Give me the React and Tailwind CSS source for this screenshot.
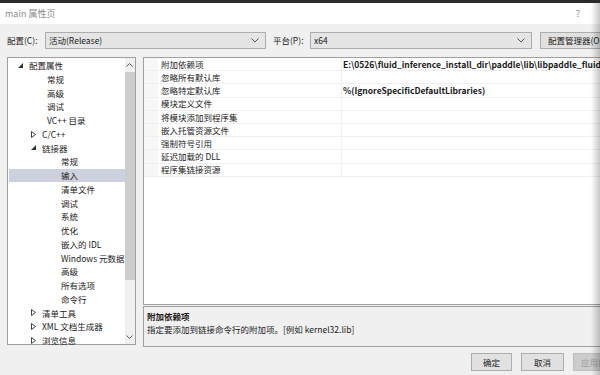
import React from "react";

const tree = [
  { t: "配置属性", lv: 0, exp: "open" },
  { t: "常规", lv: 1 },
  { t: "高级", lv: 1 },
  { t: "调试", lv: 1 },
  { t: "VC++ 目录", lv: 1 },
  { t: "C/C++", lv: 1, exp: "closed" },
  { t: "链接器", lv: 1, exp: "open" },
  { t: "常规", lv: 2 },
  { t: "输入", lv: 2, sel: true },
  { t: "清单文件", lv: 2 },
  { t: "调试", lv: 2 },
  { t: "系统", lv: 2 },
  { t: "优化", lv: 2 },
  { t: "嵌入的 IDL", lv: 2 },
  { t: "Windows 元数据", lv: 2 },
  { t: "高级", lv: 2 },
  { t: "所有选项", lv: 2 },
  { t: "命令行", lv: 2 },
  { t: "清单工具", lv: 1, exp: "closed" },
  { t: "XML 文档生成器", lv: 1, exp: "closed" },
  { t: "浏览信息", lv: 1, exp: "closed" },
];

const props = [
  ["附加依赖项", "E:\\0526\\fluid_inference_install_dir\\paddle\\lib\\libpaddle_fluid.lib"],
  ["忽略所有默认库", ""],
  ["忽略特定默认库", "%(IgnoreSpecificDefaultLibraries)"],
  ["模块定义文件", ""],
  ["将模块添加到程序集", ""],
  ["嵌入托管资源文件", ""],
  ["强制符号引用", ""],
  ["延迟加载的 DLL", ""],
  ["程序集链接资源", ""],
];

function Chevron() {
  return (
    <svg width="8" height="5" viewBox="0 0 8 5" className="shrink-0">
      <path d="M0.5 0.5 L4 4 L7.5 0.5" fill="none" stroke="#555" strokeWidth="1" />
    </svg>
  );
}

function Arrow({ exp }) {
  if (exp === "open")
    return (
      <svg width="5" height="5" viewBox="0 0 5 5">
        <polygon points="5,0 5,5 0,5" fill="#333" />
      </svg>
    );
  return (
    <svg width="5" height="7" viewBox="0 0 5 7">
      <polygon points="0.5,0.5 4.5,3.5 0.5,6.5" fill="none" stroke="#444" strokeWidth="1" />
    </svg>
  );
}

function Combo({ w, text }) {
  return (
    <div className={`${w} shrink-0 h-[17px] bg-[#e5e5e5] border border-[#acacac] flex items-center justify-between pl-[3px] pr-[6px]`}>
      <span>{text}</span>
      <Chevron />
    </div>
  );
}

export default function App() {
  const indent = ["pl-[25px]", "pl-[38px]", "pl-[52px]"];
  const arrowPos = ["w-[17px] pl-[9px]", "w-[30px] pl-[22px]", "w-[44px] pl-[36px]"];
  return (
    <div className="w-[600px] h-[375px] bg-[#f0f0f0] relative overflow-hidden font-['Noto_Sans_CJK_SC',sans-serif] text-[8.5px] leading-none text-[#1a1a1a]">
      <div className="h-[3px] bg-[#2b2b2b]" />
      <div className="h-[21px] bg-white flex items-center justify-between pl-[5px] pr-[20px] text-[#8c8c8c] text-[9px]">
        <span>main 属性页</span>
        <span>?</span>
      </div>

      <div className="flex items-center mt-[8px] pl-[7px] whitespace-nowrap">
        <span className="w-[38px] shrink-0">配置(C):</span>
        <Combo w="w-[221px]" text="活动(Release)" />
        <span className="w-[37px] ml-[7px] shrink-0">平台(P):</span>
        <Combo w="w-[222px]" text="x64" />
        <div className="ml-[8px] w-[76px] shrink-0 h-[17px] bg-[#e1e1e1] border border-[#adadad] flex items-center pl-[7px]">
          配置管理器(O)
        </div>
      </div>

      <div className="flex mt-[8px] pl-[7px] gap-[7px]">
        <div className="w-[129px] h-[288px] shrink-0 bg-white border border-[#a0a0a0] flex">
          <div className="flex-1 pt-[0.5px] pl-[1px]">
            {tree.map((it, i) => (
              <div
                key={i}
                className={`h-[13.75px] flex items-center whitespace-nowrap ${it.sel ? "bg-[#cdd1dd]" : ""} ${it.exp ? "" : indent[it.lv]}`}
              >
                {it.exp && (
                  <>
                    <span className={`${arrowPos[it.lv]} shrink-0 flex items-center`}>
                      <Arrow exp={it.exp} />
                    </span>
                    <span className="pl-[3px]">{it.t}</span>
                  </>
                )}
                {!it.exp && it.t}
              </div>
            ))}
          </div>
          <div className="w-[12px] bg-[#f0f0f0] flex flex-col items-center">
            <div className="h-[14px] flex items-center justify-center">
              <svg width="7" height="4" viewBox="0 0 7 4">
                <path d="M0.5 3.5 L3.5 0.5 L6.5 3.5" fill="none" stroke="#606060" />
              </svg>
            </div>
            <div className="w-[10px] h-[208px] bg-[#cdcdcd]" />
            <div className="flex-1" />
            <div className="h-[14px] flex items-center justify-center">
              <svg width="7" height="4" viewBox="0 0 7 4">
                <path d="M0.5 0.5 L3.5 3.5 L6.5 0.5" fill="none" stroke="#606060" />
              </svg>
            </div>
          </div>
        </div>

        <div className="flex-1 flex flex-col">
          <div className="h-[248px] w-[470px] bg-white border border-[#a0a0a0]">
            {props.map(([n, v], i) => (
              <div key={i} className="h-[13.2px] flex border-b border-[#f0f0f0] whitespace-nowrap">
                <div className="w-[14px] bg-[#f7f7f7]" />
                <div className="w-[184px] border-r border-[#f0f0f0] flex items-center pl-[3px]">{n}</div>
                <div className="flex-1 flex items-center pl-[1px] font-bold overflow-hidden">{v}</div>
              </div>
            ))}
          </div>
          <div className="mt-[1px] h-[41px] w-[470px] bg-[#f0f0f0] border border-[#a0a0a0] pl-[3px] pt-[3px] whitespace-nowrap">
            <div className="font-bold h-[13px] flex items-center">附加依赖项</div>
            <div className="h-[13px] flex items-center">指定要添加到链接命令行的附加项。[例如 kernel32.lib]</div>
          </div>
        </div>
      </div>

      <div className="flex justify-end gap-[9px] mt-[6px] mr-[-28px] whitespace-nowrap">
        <div className="w-[41px] shrink-0 h-[18px] bg-[#e1e1e1] border border-[#adadad] flex items-center justify-center">确定</div>
        <div className="w-[43px] shrink-0 h-[18px] bg-[#e1e1e1] border border-[#adadad] flex items-center justify-center">取消</div>
        <div className="w-[55px] shrink-0 h-[18px] bg-[#cccccc] border border-[#bfbfbf] text-[#9c9c9c] flex items-center pl-[7px]">应用(A)</div>
      </div>

      <div className="absolute right-0 top-[3px] bottom-0 w-[9px] bg-gradient-to-r from-transparent to-[#00000038]" />
    </div>
  );
}
